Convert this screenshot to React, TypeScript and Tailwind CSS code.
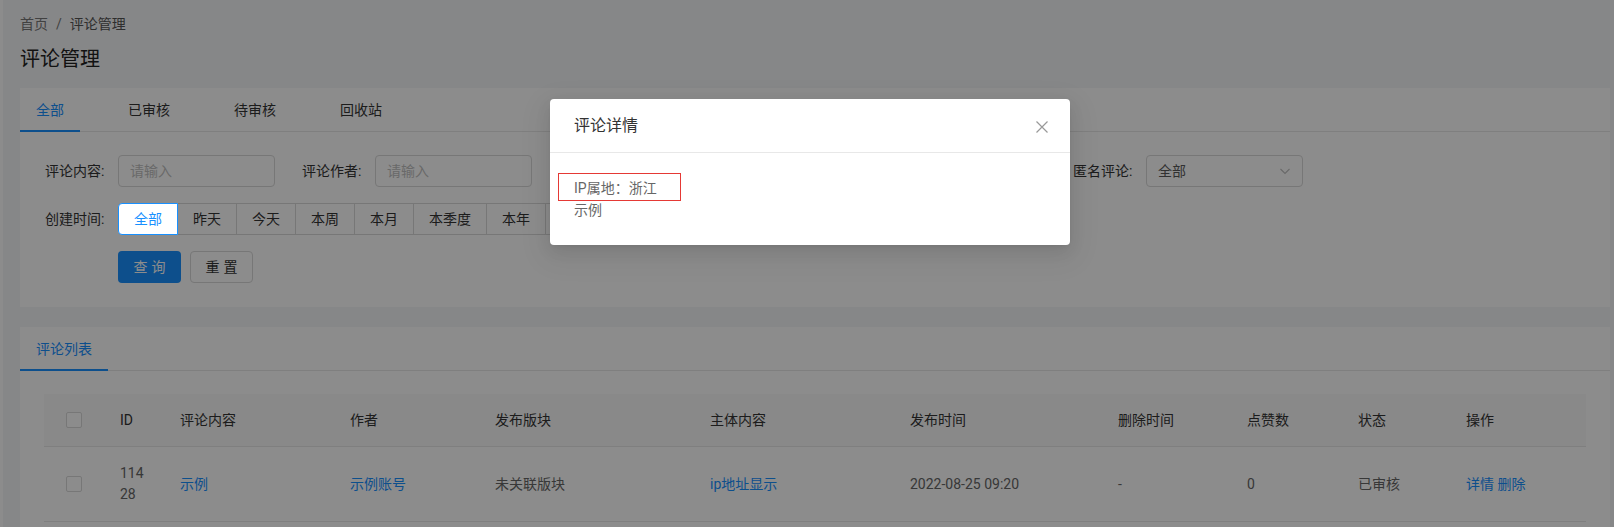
import type { ReactNode } from 'react'

const FONT = "font-['Roboto','Noto_Sans_CJK_SC',sans-serif]"

const tabs = ['全部', '已审核', '待审核', '回收站']
const ranges = ['全部', '昨天', '今天', '本周', '本月', '本季度', '本年', '自定义']

// column widths for the comment table
const cols = [60, 60, 170, 145, 215, 200, 208, 129, 111, 108, 135]
const headers = ['', 'ID', '评论内容', '作者', '发布版块', '主体内容', '发布时间', '删除时间', '点赞数', '状态', '操作']

function Checkbox() {
  return <span className="block w-4 h-4 rounded-[2px] border border-[#d9d9d9] bg-white" />
}

function Chevron() {
  return (
    <svg width="12" height="12" viewBox="0 0 12 12" fill="none" stroke="#bfbfbf" strokeWidth="1.1">
      <path d="M1.5 4l4.5 4.5L10.5 4" />
    </svg>
  )
}

function Field({ label, children }: { label: string; children: ReactNode }) {
  return (
    <div className="flex items-center">
      <span className="w-[73px] shrink-0 text-[#333]">{label}:</span>
      {children}
    </div>
  )
}

function TextInput() {
  return (
    <div className="w-[157px] h-8 rounded border border-[#d9d9d9] bg-white px-[11px] flex items-center text-[#bfbfbf]">
      请输入
    </div>
  )
}

function Select({ value }: { value: string }) {
  return (
    <div className="w-[157px] h-8 rounded border border-[#d9d9d9] bg-white pl-[11px] pr-[11px] flex items-center justify-between text-[#595959]">
      <span>{value}</span>
      <Chevron />
    </div>
  )
}

function Cell({ w, children, className = '' }: { w: number; children?: ReactNode; className?: string }) {
  return (
    <div className={`shrink-0 px-4 ${className}`} style={{ width: w }}>
      {children}
    </div>
  )
}

export default function App() {
  return (
    <div className={`relative w-[1614px] h-[527px] overflow-hidden bg-[#f5f6f7] text-[14px] leading-[22px] ${FONT}`}>
      <div className="flex h-full">
        <aside className="w-[3px] shrink-0 bg-white" />

        <main className="flex-1 pl-[17px] pr-[4px] pt-[13px]">
          {/* breadcrumb + page title */}
          <div className="flex items-center text-[#777]">
            <span>首页</span>
            <span className="mx-2">/</span>
            <span className="text-[#555]">评论管理</span>
          </div>
          <h1 className="mt-[10px] text-[20px] leading-[28px] text-[#222]">评论管理</h1>

          {/* filter card */}
          <section className="mt-[15px] bg-white">
            <div className="h-[44px] flex gap-8 border-b border-[#e8e8e8]">
              {tabs.map((t, i) => (
                <div
                  key={t}
                  className={`relative px-4 flex items-center ${i === 0 ? 'text-[#1890ff]' : 'text-[#333]'}`}
                >
                  {t}
                  {i === 0 && <span className="absolute left-0 right-0 -bottom-px h-[2px] bg-[#1890ff]" />}
                </div>
              ))}
            </div>

            <div className="pl-[25px] pt-[23px] pb-6">
              <div className="flex gap-[27px]">
                <Field label="评论内容"><TextInput /></Field>
                <Field label="评论作者"><TextInput /></Field>
                <Field label="发布版块"><Select value="全部" /></Field>
                <Field label="主体内容"><TextInput /></Field>
                <Field label="匿名评论"><Select value="全部" /></Field>
              </div>

              <div className="mt-4 flex items-center">
                <span className="w-[73px] shrink-0 text-[#333]">创建时间:</span>
                <div className="flex">
                  {ranges.map((r, i) => (
                    <span
                      key={r}
                      className={`h-8 px-[15px] flex items-center border bg-white ${
                        i === 0
                          ? 'relative z-10 rounded-l border-[#1890ff] text-[#1890ff]'
                          : '-ml-px border-[#d9d9d9] text-[#333]'
                      } ${i === ranges.length - 1 ? 'rounded-r' : ''}`}
                    >
                      {r}
                    </span>
                  ))}
                </div>
              </div>

              <div className="mt-4 ml-[73px] flex gap-[9px]">
                <button className="w-[63px] h-8 rounded bg-[#1890ff] text-white tracking-[4px] pl-1">查询</button>
                <button className="w-[63px] h-8 rounded border border-[#d9d9d9] bg-white text-[#333] tracking-[4px] pl-1">重置</button>
              </div>
            </div>
          </section>

          {/* list card */}
          <section className="mt-5 bg-white">
            <div className="h-[44px] flex border-b border-[#e8e8e8]">
              <div className="relative px-4 flex items-center text-[#1890ff]">
                评论列表
                <span className="absolute left-0 right-0 -bottom-px h-[2px] bg-[#1890ff]" />
              </div>
            </div>

            <div className="px-6 pt-[23px] pb-6">
              <div className="flex items-center h-[53px] bg-[#fafafa] border-b border-[#e8e8e8] text-[#333]">
                {headers.map((h, i) => (
                  <Cell key={i} w={cols[i]} className={i === 0 ? 'flex justify-center !px-0' : ''}>
                    {i === 0 ? <Checkbox /> : h}
                  </Cell>
                ))}
              </div>

              <div className="flex items-center h-[75px] border-b border-[#e8e8e8] text-[#666]">
                <Cell w={cols[0]} className="flex justify-center !px-0"><Checkbox /></Cell>
                <Cell w={cols[1]} className="break-all leading-[21px]">11428</Cell>
                <Cell w={cols[2]} className="text-[#1890ff]">示例</Cell>
                <Cell w={cols[3]} className="text-[#1890ff]">示例账号</Cell>
                <Cell w={cols[4]}>未关联版块</Cell>
                <Cell w={cols[5]} className="text-[#1890ff]">ip地址显示</Cell>
                <Cell w={cols[6]}>2022-08-25 09:20</Cell>
                <Cell w={cols[7]}>-</Cell>
                <Cell w={cols[8]}>0</Cell>
                <Cell w={cols[9]}>已审核</Cell>
                <Cell w={cols[10]} className="text-[#1890ff]">详情 删除</Cell>
              </div>
            </div>
          </section>
        </main>
      </div>

      {/* modal mask */}
      <div className="absolute inset-0 bg-black/45" />

      {/* comment detail dialog */}
      <div className="absolute left-[550px] top-[99px] w-[520px] rounded bg-white shadow-[0_3px_6px_-4px_rgba(0,0,0,0.12),0_6px_16px_0_rgba(0,0,0,0.08),0_9px_28px_8px_rgba(0,0,0,0.05)]">
        <div className="relative h-[54px] px-6 flex items-center border-b border-[#e8e8e8]">
          <span className="text-[16px] text-[#333]">评论详情</span>
          <span className="absolute right-0 top-0 w-14 h-14 flex items-center justify-center">
            <svg width="14" height="14" viewBox="0 0 14 14" stroke="#999" strokeWidth="1.2">
              <path d="M1.5 1.5l11 11M12.5 1.5l-11 11" />
            </svg>
          </span>
        </div>
        <div className="relative p-6 text-[#666]">
          <div>IP属地：浙江</div>
          <div>示例</div>
          <span className="absolute left-[8px] top-[20px] w-[123px] h-[28px] border border-[#e53935]" />
        </div>
      </div>
    </div>
  )
}
